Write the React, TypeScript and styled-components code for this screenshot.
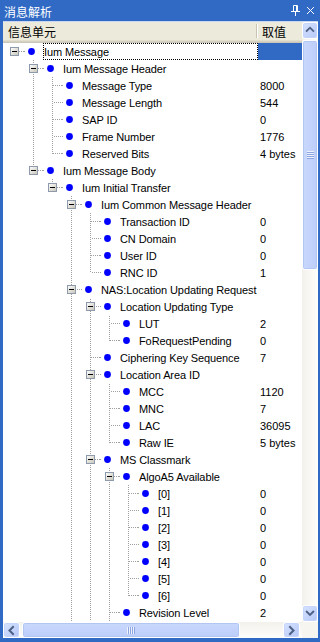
import React from "react";
import styled, { createGlobalStyle } from "styled-components";

// GLOBAL --------------------------->

const GlobalStyle = createGlobalStyle`
  html, body {
    margin: 0;
    padding: 0;
    overflow: hidden;
    background: #fff;
  }
  body {
    font-family: Tahoma, "Liberation Sans", "Noto Sans CJK SC", sans-serif;
  }
`;

const BLUE = "#316ac5";
const LINE = "#a0a0a0";
const CJK = `"Noto Sans CJK SC", "Liberation Sans", sans-serif`;
const ROW_H = 17;
const VISIBLE_ROWS = 34;

// DATA --------------------------->

type Node = { label: string; value?: string; children?: Node[] };

const leaf = (label: string, value: string): Node => ({ label, value });

const data: Node = {
  label: "Ium Message",
  children: [
    {
      label: "Ium Message Header",
      children: [
        leaf("Message Type", "8000"),
        leaf("Message Length", "544"),
        leaf("SAP ID", "0"),
        leaf("Frame Number", "1776"),
        leaf("Reserved Bits", "4 bytes"),
      ],
    },
    {
      label: "Ium Message Body",
      children: [
        {
          label: "Ium Initial Transfer",
          children: [
            {
              label: "Ium Common Message Header",
              children: [
                leaf("Transaction ID", "0"),
                leaf("CN Domain", "0"),
                leaf("User ID", "0"),
                leaf("RNC ID", "1"),
              ],
            },
            {
              label: "NAS:Location Updating Request",
              children: [
                {
                  label: "Location Updating Type",
                  children: [leaf("LUT", "2"), leaf("FoRequestPending", "0")],
                },
                leaf("Ciphering Key Sequence", "7"),
                {
                  label: "Location Area ID",
                  children: [
                    leaf("MCC", "1120"),
                    leaf("MNC", "7"),
                    leaf("LAC", "36095"),
                    leaf("Raw IE", "5 bytes"),
                  ],
                },
                {
                  label: "MS Classmark",
                  children: [
                    {
                      label: "AlgoA5 Available",
                      children: [0, 1, 2, 3, 4, 5, 6].map((n) =>
                        leaf(`[${n}]`, "0")
                      ),
                    },
                    leaf("Revision Level", "2"),
                    leaf("ES IND", "1"),
                  ],
                },
                leaf("Mobile Identity", "5 bytes"),
              ],
            },
            leaf("Ium Extension", "0"),
          ],
        },
      ],
    },
  ],
};

type Row = {
  node: Node;
  level: number;
  hasNext: boolean;
  trail: boolean[];
};

// trail[k] = does the ancestor at level k have a sibling below it
const flatten = (
  node: Node,
  level: number,
  hasNext: boolean,
  trail: boolean[],
  out: Row[]
) => {
  out.push({ node, level, hasNext, trail });
  const kids = node.children || [];
  kids.forEach((child, i) =>
    flatten(child, level + 1, i < kids.length - 1, [...trail, hasNext], out)
  );
  return out;
};

// only the rows that fit in the view are drawn, lines still come from the whole tree
const rows = flatten(data, 0, false, [], []).slice(0, VISIBLE_ROWS);

// STYLED COMPONENTS --------------------------->

const Frame = styled.div`
  width: 320px;
  height: 642px;
  box-sizing: border-box;
  background: ${BLUE};
  padding: 0 2px 4px 3px;
  display: flex;
  flex-direction: column;
`;

const TitleBar = styled.div`
  height: 21px;
  display: flex;
  align-items: center;
  color: #fff;
  font: 12px ${CJK};
  padding-left: 1px;
`;

const TitleText = styled.span`
  flex: 1;
  padding-top: 1px;
`;

const TitleButton = styled.span`
  width: 15px;
  height: 21px;
  display: flex;
  align-items: center;
  justify-content: center;
`;

const Content = styled.div`
  flex: 1;
  min-height: 0;
  border-top: 1px solid #c9d7f2;
  background: #fff;
  display: grid;
  grid-template-columns: 1fr 16px;
  grid-template-rows: 1fr 16px;
`;

const TreePane = styled.div`
  display: flex;
  flex-direction: column;
  min-height: 0;
  overflow: hidden;
`;

const Header = styled.div`
  height: 21px;
  flex: none;
  box-sizing: border-box;
  padding-bottom: 3px;
  display: flex;
  align-items: center;
  background: #ebeadb;
  box-shadow: inset 0 -1px #cbc7b8, inset 0 -2px #d6d2c2, inset 0 -3px #e2decd;
  font: 12px ${CJK};
  color: #000;
`;

const HeaderName = styled.div`
  width: 255px;
  box-sizing: border-box;
  padding-left: 5px;
  display: flex;
  align-items: center;
  justify-content: space-between;
`;

const Divider = styled.span`
  width: 1px;
  height: 14px;
  background: #c7c5b2;
  border-right: 1px solid #fff;
`;

const HeaderValue = styled.div`
  padding-left: 4px;
`;

const Body = styled.div`
  flex: 1;
  min-height: 0;
  overflow: hidden;
`;

const RowLine = styled.div`
  height: ${ROW_H}px;
  display: flex;
`;

const TreeCell = styled.div`
  width: 255px;
  flex: none;
  box-sizing: border-box;
  padding-left: 2px;
  display: flex;
`;

const Guide = styled.svg`
  width: 19px;
  height: ${ROW_H}px;
  flex: none;
  display: block;
`;

const Bullet = styled.svg`
  width: 16px;
  height: ${ROW_H}px;
  flex: none;
  display: block;
`;

const Label = styled.div<{ $focused?: boolean }>`
  flex: 1;
  min-width: 0;
  margin-left: 3px;
  box-sizing: border-box;
  border: 1px dotted ${(p) => (p.$focused ? "#000" : "transparent")};
  font-size: 11px;
  letter-spacing: -0.1px;
  line-height: 16px;
  color: #000;
  white-space: nowrap;
  overflow: hidden;
`;

const ValueCell = styled.div<{ $selected?: boolean }>`
  flex: 1;
  box-sizing: border-box;
  padding: 1px 0 0 2px;
  font-size: 11px;
  line-height: 16px;
  white-space: nowrap;
  overflow: hidden;
  color: ${(p) => (p.$selected ? "#fff" : "#000")};
  background: ${(p) => (p.$selected ? BLUE : "transparent")};
`;

const VScroll = styled.div`
  display: flex;
  flex-direction: column;
  background: linear-gradient(to right, #f3f1ec, #fefefb);
`;

const HScroll = styled.div`
  display: flex;
  background: linear-gradient(to bottom, #f3f1ec, #fefefb);
`;

const Spacer = styled.div<{ $size?: number }>`
  flex: ${(p) => (p.$size ? `0 0 ${p.$size}px` : "1")};
`;

const ScrollButton = styled.div<{ $w: number; $h: number }>`
  width: ${(p) => p.$w}px;
  height: ${(p) => p.$h}px;
  flex: none;
  box-sizing: border-box;
  border: 1px solid #fff;
  border-radius: 3px;
  background: linear-gradient(135deg, #d6e2fe, #b5c8f7);
  box-shadow: inset 0 0 0 1px #c4d4fb;
  display: flex;
  align-items: center;
  justify-content: center;
`;

const Thumb = styled.div<{ $vertical?: boolean; $size: number; $offset: number }>`
  flex: none;
  box-sizing: border-box;
  ${(p) =>
    p.$vertical
      ? `height: ${p.$size}px; margin-top: ${p.$offset}px;`
      : `width: ${p.$size}px; margin-left: ${p.$offset}px;`}
  border: 1px solid #fff;
  border-radius: 3px;
  background: ${(p) =>
    p.$vertical
      ? "linear-gradient(to right, #c9d8fc, #bccdfa)"
      : "linear-gradient(to bottom, #c9d8fc, #bccdfa)"};
  box-shadow: inset 0 0 0 1px #b3c6f3;
  display: flex;
  align-items: center;
  justify-content: center;
`;

const Grip = styled.span<{ $vertical?: boolean }>`
  display: block;
  ${(p) =>
    p.$vertical
      ? `width: 7px; height: 8px;
         background: repeating-linear-gradient(to bottom, #eef3fe 0 1px, #8ca5e2 1px 2px);`
      : `width: 8px; height: 7px;
         background: repeating-linear-gradient(to right, #eef3fe 0 1px, #8ca5e2 1px 2px);`}
`;

const Corner = styled.div`
  background: #f6f5f0;
`;

// PIECES --------------------------->

const Connector = ({
  kind,
  box,
  phase,
}: {
  kind: "pass" | "tee" | "elbow" | "root" | "none";
  box?: boolean;
  phase: number;
}) => (
  <Guide viewBox={`0 0 19 ${ROW_H}`}>
    <g stroke={LINE} strokeWidth={1} strokeDasharray="1 1" strokeDashoffset={phase}>
      {(kind === "pass" || kind === "tee") && (
        <line x1={9.5} y1={0} x2={9.5} y2={ROW_H} />
      )}
      {kind === "elbow" && <line x1={9.5} y1={0} x2={9.5} y2={9} />}
      {(kind === "tee" || kind === "elbow" || kind === "root") && (
        <line x1={10} y1={8.5} x2={19} y2={8.5} />
      )}
    </g>
    {box && (
      <g>
        <defs>
          <linearGradient id="boxfill" x1="0" y1="0" x2="1" y2="1">
            <stop offset="0" stopColor="#ffffff" />
            <stop offset="1" stopColor="#c6c3b5" />
          </linearGradient>
        </defs>
        <rect x={5.5} y={4.5} width={8} height={8} fill="url(#boxfill)" stroke="#8d9aab" />
        <line x1={7} y1={8.5} x2={12} y2={8.5} stroke="#000" />
      </g>
    )}
  </Guide>
);

const Dot = () => (
  <Bullet viewBox={`0 0 16 ${ROW_H}`}>
    <line x1={0} y1={8.5} x2={2} y2={8.5} stroke={LINE} strokeDasharray="1 1" />
    <circle cx={7.5} cy={8.5} r={3.4} fill="#0000ff" />
  </Bullet>
);

const Chevron = ({ dir }: { dir: "up" | "down" | "left" | "right" }) => {
  const pts = {
    up: "4,8 7.5,4.5 11,8",
    down: "4,5.5 7.5,9 11,5.5",
    left: "9,4 5.5,7.5 9,11",
    right: "6,4 9.5,7.5 6,11",
  }[dir];
  return (
    <svg width={15} height={15} viewBox="0 0 15 15">
      <polyline
        points={pts}
        fill="none"
        stroke="#4d6185"
        strokeWidth={2}
        strokeLinecap="square"
      />
    </svg>
  );
};

const PinIcon = () => (
  <svg width={9} height={11} viewBox="0 0 9 11">
    <g stroke="#fff" fill="none">
      <path d="M2.5 0.5 H6.5 V6 M2.5 0.5 V6" />
      <line x1={5.5} y1={1} x2={5.5} y2={6} />
      <line x1={0} y1={6.5} x2={9} y2={6.5} />
      <line x1={4.5} y1={7} x2={4.5} y2={11} />
    </g>
  </svg>
);

const CloseIcon = () => (
  <svg width={9} height={9} viewBox="0 0 9 9">
    <g stroke="#fff" strokeWidth={1}>
      <line x1={1} y1={1} x2={8} y2={8} />
      <line x1={8} y1={1} x2={1} y2={8} />
    </g>
  </svg>
);

const TreeRow = ({ row, index }: { row: Row; index: number }) => {
  const { node, level, hasNext, trail } = row;
  const expandable = !!node.children;
  const own = level === 0 ? "root" : hasNext ? "tee" : "elbow";
  return (
    <RowLine>
      <TreeCell>
        {trail.map((pass, k) => (
          <Connector key={k} kind={pass ? "pass" : "none"} phase={(index + k) % 2} />
        ))}
        <Connector kind={own} box={expandable} phase={(index + level) % 2} />
        <Dot />
        <Label $focused={index === 0}>{node.label}</Label>
      </TreeCell>
      <ValueCell $selected={index === 0}>{node.value}</ValueCell>
    </RowLine>
  );
};

// FUNCTIONAL COMPONENT --------------------------->

const App = () => {
  return (
    <>
      <GlobalStyle />
      <Frame>
        <TitleBar>
          <TitleText>消息解析</TitleText>
          <TitleButton>
            <PinIcon />
          </TitleButton>
          <TitleButton>
            <CloseIcon />
          </TitleButton>
        </TitleBar>
        <Content>
          <TreePane>
            <Header>
              <HeaderName>
                信息单元
                <Divider />
              </HeaderName>
              <HeaderValue>取值</HeaderValue>
            </Header>
            <Body>
              {rows.map((row, i) => (
                <TreeRow key={i} row={row} index={i} />
              ))}
            </Body>
          </TreePane>
          <VScroll>
            <ScrollButton $w={16} $h={17}>
              <Chevron dir="up" />
            </ScrollButton>
            <Thumb $vertical $size={230} $offset={1}>
              <Grip $vertical />
            </Thumb>
            <Spacer />
            <ScrollButton $w={16} $h={17}>
              <Chevron dir="down" />
            </ScrollButton>
          </VScroll>
          <HScroll>
            <ScrollButton $w={17} $h={16}>
              <Chevron dir="left" />
            </ScrollButton>
            <Thumb $size={218} $offset={2}>
              <Grip />
            </Thumb>
            <Spacer />
            <ScrollButton $w={17} $h={16}>
              <Chevron dir="right" />
            </ScrollButton>
            <Spacer $size={2} />
          </HScroll>
          <Corner />
        </Content>
      </Frame>
    </>
  );
};

export default App;
